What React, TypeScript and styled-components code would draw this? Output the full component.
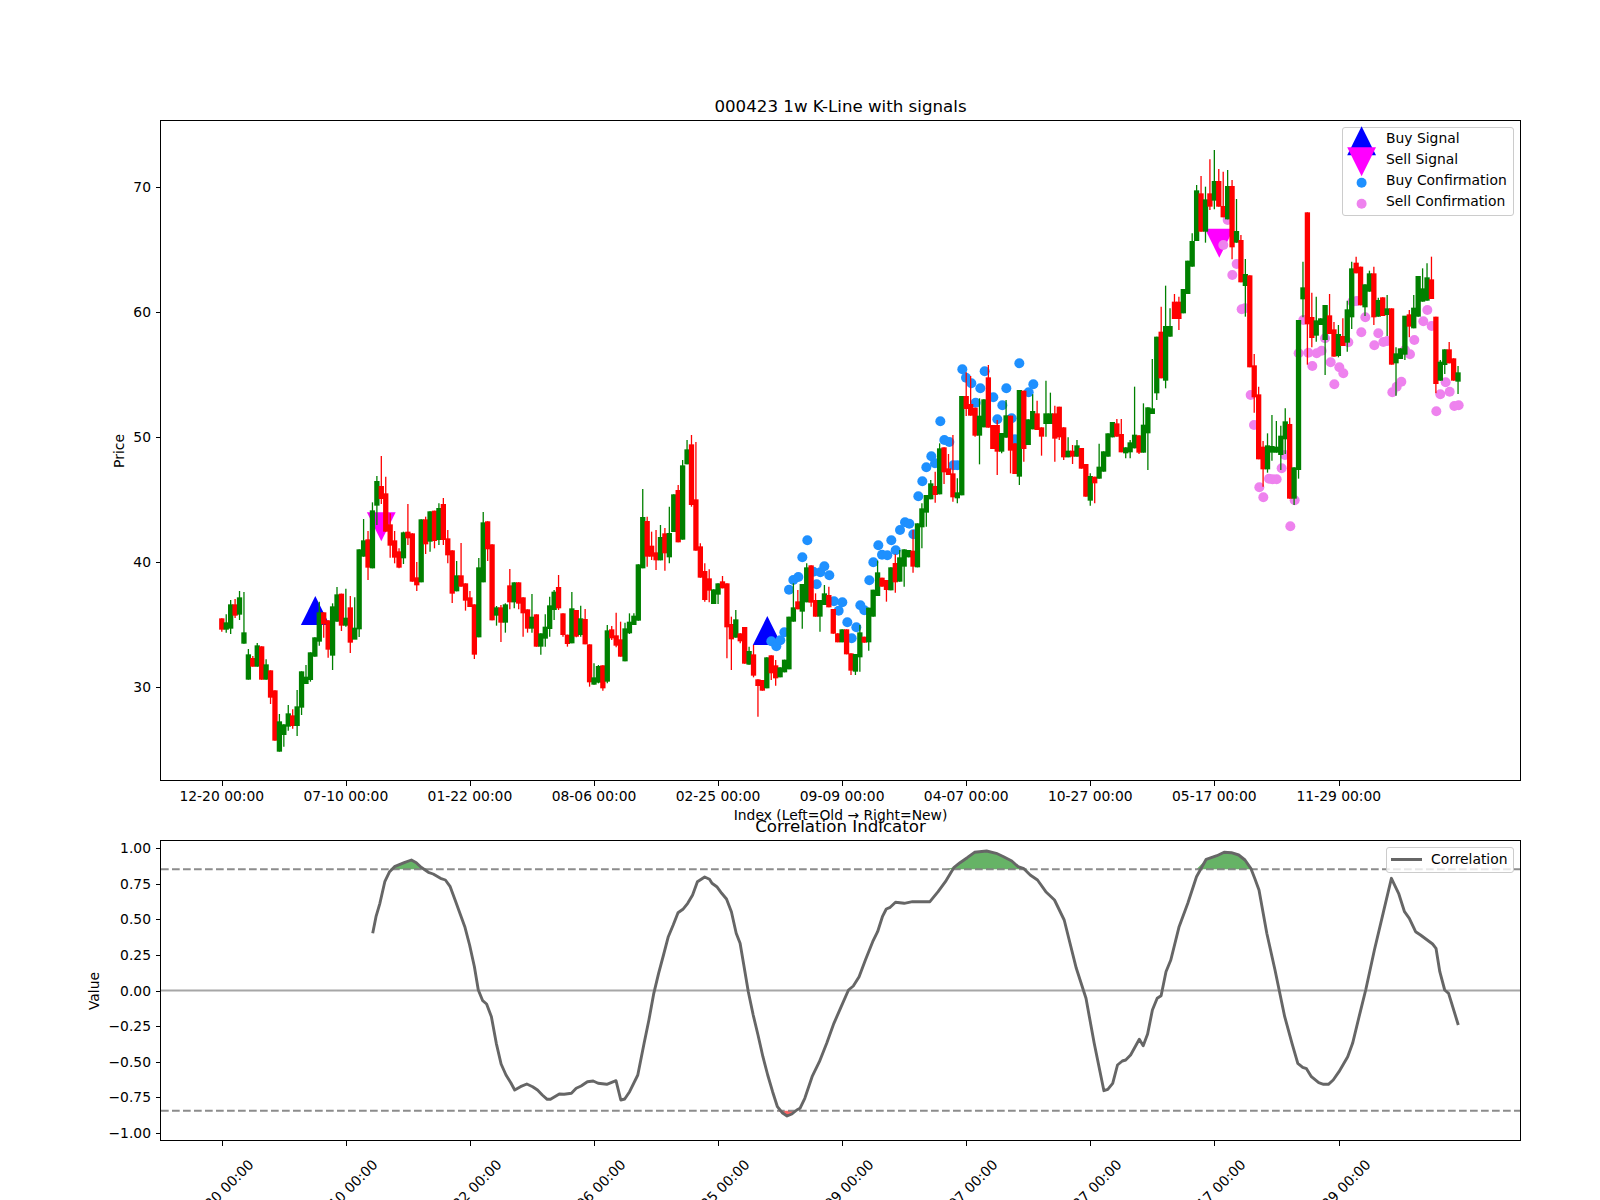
import React from 'react';
import styled, { createGlobalStyle } from 'styled-components';

// candle rows read off the chart: colour, body top, body bottom, wick top, wick bottom.
// y values are 3x px from the top offset of each block
const CANDLE_BLOCKS: { top: number; rows: string }[] = [
  {
    top: 480,
    rows: `r 415 449 415 455,g 427 449 403 458,g 373 446 360 462,r 373 407 357 414,g 352 404 333 420,g 457 491 336 491,g 523 599 507 599,r 534 560 528 560,g 496 560 489 560,r 499 599 499 599,g 553 599 538 599,r 571 653 571 672,r 631 782 631 782,g 724 815 702 815,g 733 765 733 800,g 700 740 675 752,r 706 738 688 746,g 679 738 630 768,g 574 683 574 705,g 590 612 555 612,g 517 600 517 605,g 472 530 472 530,g 397 485 365 497,r 397 433 397 473,r 421 509 421 533,g 379 527 370 570,g 343 425 321 425,r 341 437 341 453,g 413 437 326 440,r 382 488 348 519,g 443 479 352 471,g 208 448 208 471,g 181 230 117 230,r 178 263 153 300,g 91 265 67 265,g 3 77 -12 135,r 18 57 -72 72,r 40 155 -10 155,r 133 197 100 233,r 181 233 153 250,r 214 263 205 265,g 157 235 155 252,r 155 175 72 195,r 160 305 160 305,r 292 316 246 333,g 118 307 118 307,r 118 193 110 222,g 94 185 94 215,r 92 183 92 205,g 84 180 70 195,r 72 180 54 195,r 175 226 150 250,r 211 341 211 369,g 286 334 243 334,r 286 320 189 320,r 310 362 310 392,r 352 381 333 381,r 373 524 373 537,g 262 472 234 472,g 127 307 96 307,r 124 208 124 243,r 193 421 193 421,g 382 407 378 437,r 382 428 375 486,g 373 428 370 458,r 316 367 267 388,g 307 367 307 385,r 307 371 307 388,r 352 400 352 470,r 388 446 388 458,g 410 446 342 458,r 403 500 403 500,g 460 500 460 524,g 440 476 403 500,g 376 447 350 470`,
  },
  {
    top: 440,
    rows: `g 455 510 450 540,r 441 505 405 510,r 520 585 520 590,r 584 612 584 620,g 505 610 456 610,r 510 590 510 592,g 535 585 497 590,r 537 613 507 613,r 613 727 613 740,g 712 734 670 734,g 678 728 675 730,r 676 745 676 752,g 571 725 555 730,r 568 595 558 600,r 586 617 518 622,r 598 650 545 650,g 565 664 548 664,g 545 580 520 582,g 527 555 520 555,g 373 542 373 542,g 231 385 147 385,r 243 350 230 380,r 317 350 275 360,r 337 361 270 390,g 291 361 255 361,r 280 340 264 392,g 279 352 200 370,g 163 276 163 276,r 150 307 135 307,g 76 299 60 299,g 28 73 0 73,r 13 195 -15 200,r 178 332 6 332,r 319 413 310 413,r 393 480 370 485,r 415 452 388 487,g 448 492 448 492,g 430 464 430 492,r 424 445 408 445,r 430 562 430 655,r 552 598 530 690,g 538 593 510 593,r 580 604 580 610,r 561 671 561 671,g 633 674 620 674,r 643 707 615 712,r 718 738 718 830,r 720 752 720 752,g 652 745 652 745,r 646 700 646 720,r 676 715 660 737,g 682 712 682 712,g 659 697 659 697,g 530 688 530 688,g 502 545 430 545,r 484 508 450 508,g 432 515 432 566,g 382 487 370 487,r 376 488 376 500,r 480 530 460 530,g 480 530 480 575,g 460 495 435 495,r 465 502 440 502,r 507 581 507 581,r 580 607 580 607,g 568 607 568 607,r 568 643 568 643,r 640 692 640 705,g 642 695 642 705,g 577 652 555 695,r 590 608 590 608,g 503 607 503 632,g 449 530 449 530,g 397 468 362 468,r 413 440 413 440,r 420 450 420 485,g 382 451 382 451,r 369 427 343 458,g 352 425 330 425,g 328 380 328 440,g 330 352 330 352,r 332 380 270 398,g 250 382 250 382,g 205 262 190 325,g 165 218 165 260`,
  },
  {
    top: 340,
    rows: `g 430 478 420 478,r 438 465 395 488,g 325 463 310 463,r 322 397 322 432,r 385 405 342 405,r 400 472 285 485,g 457 475 415 490,g 168 466 168 466,r 168 207 97 228,r 192 227 108 227,r 203 287 203 290,g 227 287 175 373,g 178 262 178 262,r 112 263 75 263,r 255 327 255 327,r 255 335 240 405,g 279 335 279 340,g 226 293 180 293,r 227 332 227 400,r 310 402 310 402,g 150 410 150 435,r 152 327 152 365,g 238 315 238 315,g 213 268 163 268,r 220 270 182 270,r 262 290 262 347,g 220 252 122 290,g 220 252 158 252,r 220 296 197 365,r 200 292 200 300,r 262 352 262 360,g 332 352 292 352,r 332 350 315 372,g 316 350 300 350,r 324 386 324 386,r 372 470 372 470,g 408 482 400 497,r 410 430 410 490,g 380 416 311 416,g 334 395 334 395,g 280 350 280 350,g 246 292 246 292,r 250 290 237 290,r 282 337 237 337,g 322 340 322 355,g 307 337 300 355,g 284 325 140 325,r 286 338 286 342,g 254 338 190 338,g 202 280 202 390,g 205 222 57 222`,
  },
  {
    top: 80,
    rows: `g 770 940 770 960,r 755 895 680 895,g 738 902 617 925,g 738 770 685 770,r 665 717 642 717,r 665 717 650 750,g 627 700 627 700,g 542 642 542 642,g 483 560 460 560,g 331 483 315 483`,
  },
  {
    top: 120,
    rows: `r 220 335 168 335,g 238 335 200 368,r 220 260 118 270,g 183 242 90 268,r 183 260 147 260,r 258 292 155 292,g 198 298 150 298,r 198 382 180 418,g 333 368 237 368,r 360 487 345 487,g 462 498 417 590`,
  },
  {
    top: 260,
    rows: `r 46 322 46 322,r 316 412 282 458,r 403 598 380 598,r 560 628 543 680,g 556 628 520 638,g 558 578 465 602,g 560 578 483 578,g 527 585 497 630,g 484 538 445 582,r 492 716 473 716,g 622 716 622 735,g 180 630 180 656,g 82 118 5 172,r -143 193 -143 314,r 171 234 98 262,g 181 227 110 245,g 175 195 175 195,g 135 240 135 345,r 166 222 102 222,r 208 290 186 290,g 222 288 195 292,r 228 258 175 258,g 148 248 122 275,g 25 172 5 207,r 8 40 -10 40,r 20 136 20 136,g 73 142 73 168,g 40 95 32 95,r 40 172 20 195,g 120 170 113 170,r 112 168 112 168,g 145 165 105 228,r 145 314 145 314,g 280 310 262 407,g 265 297 265 297,g 167 284 210 300,r 163 200 150 232,g 143 205 105 205,g 48 170 48 170,g 85 125 25 125,g 52 122 10 122,r 58 117 -10 117,r 170 372 170 400,g 305 362 300 362,g 268 315 268 342,r 268 310 246 310,r 295 362 295 362,g 337 365 318 402`,
  },
];

type Candle = { up: boolean; top: number; bottom: number; high: number; low: number };

const CANDLES: Candle[] = CANDLE_BLOCKS.flatMap(({ top, rows }) =>
  rows.split(',').map((row) => {
    const [c, a, b, d, e] = row.split(' ');
    return {
      up: c === 'g',
      top: top + Number(a) / 3,
      bottom: top + Number(b) / 3,
      high: top + Number(d) / 3,
      low: top + Number(e) / 3,
    };
  })
);

const STEP = 4.431;
const candleX = (i: number) => 221.8 + STEP * i;
const priceY = (v: number) => 186.7 + (70 - v) * 12.5;
const valueY = (v: number) => 990.5 - 142.65 * v;

const scatter = (x0: number, y0: number, pts: number[][]) =>
  pts.map(([x, y]) => [x0 + x / 3, y0 + y / 3]);

const BUY_DOTS = [
  ...scatter(550, 440, [
    [717, 449], [730, 420], [745, 411], [757, 352], [772, 301], [800, 433], [790, 395], [811, 397], [823, 379],
    [838, 406], [852, 484], [877, 487], [866, 512], [892, 547], [919, 562], [905, 595], [931, 496], [943, 511],
    [958, 421], [970, 367], [985, 316], [996, 344], [1012, 346], [1037, 331], [1024, 301], [664, 604], [679, 619],
    [691, 601], [703, 577],
  ]),
  ...scatter(900, 340, [
    [0, 570], [15, 547], [28, 551], [40, 583], [55, 469], [67, 424], [79, 382], [94, 349], [105, 370], [121, 244],
    [133, 300], [148, 306], [160, 376], [172, 376], [187, 88], [198, 113], [214, 130], [227, 188], [241, 145],
    [254, 94], [280, 172], [292, 238], [307, 196], [319, 145], [335, 235], [345, 298], [358, 70], [386, 157],
    [400, 133],
  ]),
];

const SELL_DOTS = [
  ...scatter(1200, 120, [[70, 375], [83, 300], [97, 465], [110, 432]]),
  ...scatter(1200, 260, [
    [125, 148], [135, 145], [152, 405], [162, 495], [178, 682], [190, 712], [207, 656], [218, 658], [230, 658],
    [245, 625], [255, 585], [271, 799], [284, 721], [296, 280], [310, 180], [325, 278], [350, 280], [365, 272],
    [337, 318], [392, 307], [418, 322], [430, 340], [403, 373], [375, 235], [445, 247], [457, 125], [470, 123],
    [484, 217], [496, 172], [523, 256], [535, 220], [550, 246], [562, 243], [577, 397], [590, 380], [604, 365],
    [615, 270], [630, 283], [643, 240], [670, 184], [682, 150], [695, 198], [721, 403], [737, 367], [749, 395],
    [709, 454], [763, 438], [776, 436],
  ]),
];

const CURVE_LEFT = [
  [645, 520], [652, 470], [660, 430], [670, 365], [680, 335], [690, 320], [710, 308], [725, 300], [735, 308],
  [745, 322], [760, 337], [770, 342], [785, 355], [795, 360], [805, 380], [815, 420], [825, 460], [835, 500],
  [845, 555], [855, 620], [863, 690], [872, 722], [880, 732], [890, 770], [900, 850], [910, 912], [920, 945],
  [930, 968], [938, 990], [950, 980], [963, 972], [975, 980], [985, 990], [995, 1005], [1005, 1018], [1012, 1018],
  [1030, 1002], [1040, 1003], [1055, 1000], [1065, 985], [1075, 978], [1088, 965], [1100, 963], [1110, 970],
  [1128, 973], [1147, 962], [1157, 1020], [1165, 1017], [1175, 995], [1192, 945], [1205, 850], [1215, 780],
  [1225, 700], [1235, 640], [1245, 585], [1255, 530], [1265, 495], [1275, 458], [1285, 448], [1295, 430],
  [1305, 405], [1315, 365], [1330, 351], [1340, 358], [1345, 370], [1355, 380], [1365, 400], [1375, 417],
  [1385, 455], [1395, 520], [1403, 550], [1410, 610], [1420, 695], [1430, 765], [1440, 825], [1450, 890],
  [1460, 945], [1470, 995], [1480, 1040], [1490, 1058], [1500, 1068], [1510, 1062], [1520, 1050],
];

const CURVE_RIGHT = [
  [0, 1045], [10, 1015], [25, 950], [40, 905], [55, 850], [70, 790], [85, 740], [100, 690], [110, 678], [122, 650],
  [135, 600], [150, 545], [160, 515], [170, 470], [178, 447], [186, 442], [197, 427], [215, 430], [232, 425],
  [268, 425], [285, 395], [300, 365], [318, 322], [330, 308], [345, 293], [360, 277], [385, 273], [405, 280],
  [420, 290], [437, 303], [450, 320], [462, 326], [475, 345], [490, 360], [507, 395], [525, 420], [545, 480],
  [570, 625], [590, 715], [607, 850], [627, 992], [635, 988], [645, 970], [655, 915], [665, 903], [672, 900],
  [682, 885], [700, 838], [708, 857], [717, 822], [727, 750], [737, 715], [745, 707], [755, 635], [765, 600],
  [782, 500], [800, 430], [818, 350], [838, 298], [860, 287], [875, 277], [890, 278], [905, 285], [918, 300],
  [930, 325], [938, 355], [947, 390], [963, 520], [980, 630], [1000, 770], [1015, 850], [1027, 910], [1037, 922],
  [1045, 926], [1055, 950], [1070, 968], [1080, 973], [1090, 973], [1100, 960], [1112, 935], [1130, 890],
  [1140, 850], [1155, 760], [1167, 690], [1185, 570], [1203, 460], [1220, 355], [1235, 400], [1247, 455],
  [1257, 475], [1270, 515], [1280, 525], [1305, 552], [1312, 565], [1320, 635], [1330, 690], [1338, 700],
  [1358, 795],
];

const CURVE = [
  ...CURVE_LEFT.map(([x, y]) => [60 + x / 2.063, 760 + y / 3]),
  ...CURVE_RIGHT.map(([x, y]) => [800 + x / 2.063, 760 + y / 3]),
];

const toPoints = (pts: number[][]) => pts.map(([x, y]) => `${x.toFixed(1)},${y.toFixed(1)}`).join(' ');
const upperLimit = valueY(0.85);
const lowerLimit = valueY(-0.85) - 1;

const TICK_X = [0, 28, 56, 84, 112, 140, 168, 196, 224, 252.1].map(candleX);
const TICK_LABELS = [
  '12-20 00:00', '07-10 00:00', '01-22 00:00', '08-06 00:00', '02-25 00:00',
  '09-09 00:00', '04-07 00:00', '10-27 00:00', '05-17 00:00', '11-29 00:00',
];
const PRICE_TICKS = [30, 40, 50, 60, 70];
const VALUE_TICKS = [1, 0.75, 0.5, 0.25, 0, -0.25, -0.5, -0.75, -1];

const triangleUp = (x: number, y: number) => `${x},${y - 14.5} ${x - 14.4},${y + 14.5} ${x + 14.4},${y + 14.5}`;
const triangleDown = (x: number, y: number) => `${x - 14.4},${y - 14.5} ${x + 14.4},${y - 14.5} ${x},${y + 14.5}`;

const App = () => {
  return (
    <Figure>
      <GlobalStyle />
      <Column>
        <MainTitle>000423 1w K-Line with signals</MainTitle>
        <PricePanel>
          <Plot viewBox="161 121 1359 659" width="1359" height="659">
            <polygon points={triangleUp(315.3, 610.5)} fill="#0000ff" />
            <polygon points={triangleUp(767.3, 630.5)} fill="#0000ff" />
            <polygon points={triangleDown(381.3, 526.8)} fill="#ff00ff" />
            <polygon points={triangleDown(1219.3, 243.2)} fill="#ff00ff" />
            {BUY_DOTS.map(([x, y], i) => (
              <circle key={i} cx={x} cy={y} r="5" fill="#1e90ff" />
            ))}
            {SELL_DOTS.map(([x, y], i) => (
              <circle key={i} cx={x} cy={y} r="5" fill="#ee82ee" />
            ))}
            {CANDLES.map((c, i) => {
              const color = c.up ? '#008000' : '#ff0000';
              const x = candleX(i);
              return (
                <g key={i} fill={color}>
                  <line x1={x} x2={x} y1={c.high} y2={c.low} stroke={color} strokeWidth="1.3" />
                  <rect x={x - 2.65} y={c.top} width="5.3" height={c.bottom - c.top} />
                </g>
              );
            })}
          </Plot>
          {PRICE_TICKS.map((v) => (
            <YTick key={v} style={{ top: priceY(v) - 121 }}>
              {v}
            </YTick>
          ))}
          <YAxisTitle $left={-42}>Price</YAxisTitle>
          <PriceLegend>
            <LegendRow>
              <Handle viewBox="0 0 43 21">
                <polygon points={triangleUp(18.6, 12.8)} fill="#0000ff" />
              </Handle>
              Buy Signal
            </LegendRow>
            <LegendRow>
              <Handle viewBox="0 0 43 21">
                <polygon points={triangleDown(18.6, 12.8)} fill="#ff00ff" />
              </Handle>
              Sell Signal
            </LegendRow>
            <LegendRow>
              <Handle viewBox="0 0 43 21">
                <circle cx="18.6" cy="12.8" r="5" fill="#1e90ff" />
              </Handle>
              Buy Confirmation
            </LegendRow>
            <LegendRow>
              <Handle viewBox="0 0 43 21">
                <circle cx="18.6" cy="12.8" r="5" fill="#ee82ee" />
              </Handle>
              Sell Confirmation
            </LegendRow>
          </PriceLegend>
        </PricePanel>
        <TickRow>
          {TICK_X.map((x, i) => (
            <XTick key={x} style={{ left: x - 160 }}>
              <TickText>{TICK_LABELS[i]}</TickText>
            </XTick>
          ))}
        </TickRow>
        <XAxisTitle>Index (Left=Old → Right=New)</XAxisTitle>
        <SubTitle>Correlation Indicator</SubTitle>
        <CorrelationPanel>
          <Plot viewBox="161 841 1359 299" width="1359" height="299">
            <polygon
              points={toPoints([
                [CURVE[0][0], upperLimit],
                ...CURVE.map(([x, y]) => [x, Math.min(y, upperLimit)]),
                [CURVE[CURVE.length - 1][0], upperLimit],
              ])}
              fill="#008000"
              fillOpacity="0.6"
            />
            <polygon
              points={toPoints([
                [CURVE[0][0], lowerLimit],
                ...CURVE.map(([x, y]) => [x, Math.max(y, lowerLimit)]),
                [CURVE[CURVE.length - 1][0], lowerLimit],
              ])}
              fill="#ff0000"
              fillOpacity="0.6"
            />
            <line x1="161" x2="1520" y1={upperLimit} y2={upperLimit} stroke="#808080" strokeOpacity="0.9" strokeWidth="2" strokeDasharray="7.7 3.3" />
            <line x1="161" x2="1520" y1={lowerLimit} y2={lowerLimit} stroke="#808080" strokeOpacity="0.9" strokeWidth="2" strokeDasharray="7.7 3.3" />
            <line x1="161" x2="1520" y1={valueY(0)} y2={valueY(0)} stroke="#808080" strokeOpacity="0.7" strokeWidth="2" />
            <polyline points={toPoints(CURVE)} fill="none" stroke="#666666" strokeWidth="2.9" strokeLinejoin="round" />
          </Plot>
          {VALUE_TICKS.map((v) => (
            <YTick key={v} style={{ top: valueY(v) - 841 }}>
              {v < 0 ? `−${Math.abs(v).toFixed(2)}` : v.toFixed(2)}
            </YTick>
          ))}
          <YAxisTitle $left={-67}>Value</YAxisTitle>
          <CorrelationLegend>
            <LineRow>
              <LineSwatch />
              Correlation
            </LineRow>
          </CorrelationLegend>
        </CorrelationPanel>
        <TickRow>
          {TICK_X.map((x, i) => (
            <XTick key={x} style={{ left: x - 160 }}>
              <RotatedText>{TICK_LABELS[i]}</RotatedText>
            </XTick>
          ))}
        </TickRow>
      </Column>
    </Figure>
  );
};

const GlobalStyle = createGlobalStyle`
  body {
    margin: 0;
    background: #fff;
    font-family: "DejaVu Sans", sans-serif;
    color: #000;
  }
`;

const Figure = styled.div`
  width: 1600px;
  height: 1200px;
  overflow: hidden;
  background: #fff;
`;

const Column = styled.div`
  display: flex;
  flex-direction: column;
  width: 1361px;
  margin-left: 160px;
`;

const MainTitle = styled.div`
  height: 120px;
  display: flex;
  align-items: flex-end;
  justify-content: center;
  padding-bottom: 3px;
  box-sizing: border-box;
  font-size: 16.67px;
  line-height: 20px;
`;

const PricePanel = styled.div`
  position: relative;
  box-sizing: border-box;
  width: 1361px;
  height: 661px;
  border: 1px solid #000;
`;

const CorrelationPanel = styled(PricePanel)`
  height: 301px;
`;

const Plot = styled.svg`
  display: block;
  overflow: hidden;
`;

const YTick = styled.div`
  position: absolute;
  right: calc(100% + 10px);
  transform: translateY(-50%);
  font-size: 13.89px;
  line-height: 16px;
  white-space: nowrap;
  &::after {
    content: '';
    position: absolute;
    left: calc(100% + 5px);
    top: 50%;
    width: 5px;
    height: 1px;
    background: #000;
  }
`;

const YAxisTitle = styled.div<{ $left: number }>`
  position: absolute;
  top: 50%;
  left: ${(p) => p.$left}px;
  transform: translate(-50%, -50%) rotate(-90deg);
  font-size: 13.89px;
  line-height: 16px;
`;

const TickRow = styled.div`
  position: relative;
  height: 25px;
`;

const XTick = styled.div`
  position: absolute;
  top: 0;
  width: 0;
  &::before {
    content: '';
    position: absolute;
    left: 0;
    top: 0;
    width: 1px;
    height: 5px;
    background: #000;
  }
`;

const TickText = styled.span`
  position: absolute;
  top: 7px;
  left: 0;
  transform: translateX(-50%);
  font-size: 13.89px;
  line-height: 16px;
  white-space: nowrap;
`;

const RotatedText = styled(TickText)`
  top: 43px;
  left: -1px;
  transform: translateX(-50%) rotate(-45deg);
`;

const XAxisTitle = styled.div`
  text-align: center;
  font-size: 13.89px;
  line-height: 16px;
  margin-top: 1px;
`;

const SubTitle = styled.div`
  text-align: center;
  font-size: 16.67px;
  line-height: 20px;
  margin-top: -6px;
  margin-bottom: 3px;
`;

const PriceLegend = styled.div`
  position: absolute;
  top: 6px;
  right: 6px;
  box-sizing: border-box;
  width: 172px;
  height: 89px;
  background: rgba(255, 255, 255, 0.8);
  border: 1px solid #ccc;
  border-radius: 3px;
  font-size: 13.89px;
`;

const CorrelationLegend = styled(PriceLegend)`
  width: 128px;
  height: 26px;
`;

const LegendRow = styled.div`
  display: flex;
  align-items: center;
  height: 21px;
  line-height: 21px;
  white-space: nowrap;
`;

const LineRow = styled(LegendRow)`
  height: 22px;
  padding-left: 4px;
`;

const Handle = styled.svg`
  flex: none;
  width: 43px;
  height: 21px;
  overflow: visible;
`;

const LineSwatch = styled.span`
  flex: none;
  width: 31px;
  height: 3px;
  margin-right: 9px;
  background: #666;
`;

export default App;
